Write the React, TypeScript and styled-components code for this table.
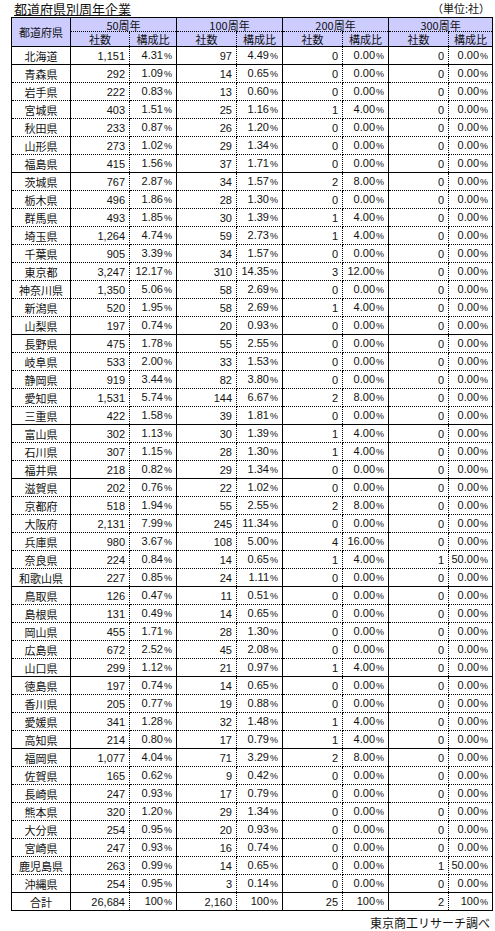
import styled, { createGlobalStyle } from "styled-components";

const GlobalStyle = createGlobalStyle`
  html, body {
    margin: 0;
    padding: 0;
    background: #fff;
  }
  body {
    font-family: "Noto Sans CJK JP", "Noto Sans", sans-serif;
    color: #111;
  }
`;

const Page = styled.div`
  width: 495px;
  padding-left: 11px;
  box-sizing: border-box;
`;

const TopBar = styled.div`
  width: 482px;
  height: 17px;
  display: flex;
  justify-content: space-between;
  align-items: center;
`;

const Title = styled.h1`
  margin: 0;
  padding-left: 3px;
  font-size: 13px;
  font-weight: 400;
  line-height: 17px;
  text-decoration: underline;
  text-underline-offset: 1px;
`;

const Unit = styled.span`
  padding-right: 3px;
  font-size: 11px;
  line-height: 17px;
`;

const Table = styled.table`
  width: 482px;
  table-layout: fixed;
  border-collapse: collapse;
  border: 1px solid #000;
  font-size: 11px;
  line-height: 12px;
`;

const Col = styled.col<{ $w: number }>`
  width: ${(p) => p.$w}px;
`;

const HeadRow = styled.tr<{ $h: number }>`
  height: ${(p) => p.$h}px;
`;

const HeadCell = styled.th<{ $right?: "solid" | "dotted"; $bottom?: "solid" | "dotted" }>`
  padding: 0;
  background: #ccccff;
  font-weight: 400;
  text-align: center;
  vertical-align: middle;
  border-right: 1px ${(p) => p.$right ?? "solid"} #000;
  border-bottom: 1px ${(p) => p.$bottom ?? "solid"} #000;
`;

const Row = styled.tr<{ $solid: boolean }>`
  height: 18px;
  & > td {
    border-bottom: 1px ${(p) => (p.$solid ? "solid" : "dotted")} #000;
  }
`;

const NameCell = styled.td`
  padding: 0;
  text-align: center;
  vertical-align: middle;
  border-right: 1px solid #000;
`;

const NumCell = styled.td<{ $kind: "count" | "ratio" }>`
  padding: 0 4px 0 0;
  text-align: right;
  vertical-align: middle;
  white-space: nowrap;
  font-family: "Liberation Sans", "Noto Sans", sans-serif;
  border-right: 1px ${(p) => (p.$kind === "count" ? "dotted" : "solid")} #000;
`;

const Pct = styled.span`
  font-size: 9px;
  margin-left: 1px;
`;

const Source = styled.div`
  width: 482px;
  margin-top: 4px;
  padding-right: 3px;
  box-sizing: border-box;
  text-align: right;
  font-size: 12px;
  line-height: 16px;
`;

const raw = `北海道,1151,4.31,97,4.49,0,0.00,0,0.00
青森県,292,1.09,14,0.65,0,0.00,0,0.00
岩手県,222,0.83,13,0.60,0,0.00,0,0.00
宮城県,403,1.51,25,1.16,1,4.00,0,0.00
秋田県,233,0.87,26,1.20,0,0.00,0,0.00
山形県,273,1.02,29,1.34,0,0.00,0,0.00
福島県,415,1.56,37,1.71,0,0.00,0,0.00
茨城県,767,2.87,34,1.57,2,8.00,0,0.00
栃木県,496,1.86,28,1.30,0,0.00,0,0.00
群馬県,493,1.85,30,1.39,1,4.00,0,0.00
埼玉県,1264,4.74,59,2.73,1,4.00,0,0.00
千葉県,905,3.39,34,1.57,0,0.00,0,0.00
東京都,3247,12.17,310,14.35,3,12.00,0,0.00
神奈川県,1350,5.06,58,2.69,0,0.00,0,0.00
新潟県,520,1.95,58,2.69,1,4.00,0,0.00
山梨県,197,0.74,20,0.93,0,0.00,0,0.00
長野県,475,1.78,55,2.55,0,0.00,0,0.00
岐阜県,533,2.00,33,1.53,0,0.00,0,0.00
静岡県,919,3.44,82,3.80,0,0.00,0,0.00
愛知県,1531,5.74,144,6.67,2,8.00,0,0.00
三重県,422,1.58,39,1.81,0,0.00,0,0.00
富山県,302,1.13,30,1.39,1,4.00,0,0.00
石川県,307,1.15,28,1.30,1,4.00,0,0.00
福井県,218,0.82,29,1.34,0,0.00,0,0.00
滋賀県,202,0.76,22,1.02,0,0.00,0,0.00
京都府,518,1.94,55,2.55,2,8.00,0,0.00
大阪府,2131,7.99,245,11.34,0,0.00,0,0.00
兵庫県,980,3.67,108,5.00,4,16.00,0,0.00
奈良県,224,0.84,14,0.65,1,4.00,1,50.00
和歌山県,227,0.85,24,1.11,0,0.00,0,0.00
鳥取県,126,0.47,11,0.51,0,0.00,0,0.00
島根県,131,0.49,14,0.65,0,0.00,0,0.00
岡山県,455,1.71,28,1.30,0,0.00,0,0.00
広島県,672,2.52,45,2.08,0,0.00,0,0.00
山口県,299,1.12,21,0.97,1,4.00,0,0.00
徳島県,197,0.74,14,0.65,0,0.00,0,0.00
香川県,205,0.77,19,0.88,0,0.00,0,0.00
愛媛県,341,1.28,32,1.48,1,4.00,0,0.00
高知県,214,0.80,17,0.79,1,4.00,0,0.00
福岡県,1077,4.04,71,3.29,2,8.00,0,0.00
佐賀県,165,0.62,9,0.42,0,0.00,0,0.00
長崎県,247,0.93,17,0.79,0,0.00,0,0.00
熊本県,320,1.20,29,1.34,0,0.00,0,0.00
大分県,254,0.95,20,0.93,0,0.00,0,0.00
宮崎県,247,0.93,16,0.74,0,0.00,0,0.00
鹿児島県,263,0.99,14,0.65,0,0.00,1,50.00
沖縄県,254,0.95,3,0.14,0,0.00,0,0.00
合計,26684,100,2160,100,25,100,2,100`;

const rows = raw.split("\n").map((line) => line.split(","));

// last row of each region gets a solid rule below it
const regionEnds = new Set([0, 6, 15, 20, 23, 29, 34, 38, 46, 47]);

const colWidths = [59, 59, 47, 60, 46, 60, 46, 60, 44];
const years = ["50周年", "100周年", "200周年", "300周年"];

const fmtCount = (v: string) => Number(v).toLocaleString("en-US");

export default function App() {
  return (
    <>
      <GlobalStyle />
      <Page>
        <TopBar>
          <Title>都道府県別周年企業</Title>
          <Unit>（単位:社）</Unit>
        </TopBar>
        <Table>
          <colgroup>
            {colWidths.map((w, i) => (
              <Col key={i} $w={w} />
            ))}
          </colgroup>
          <thead>
            <HeadRow $h={14}>
              <HeadCell rowSpan={2}>都道府県</HeadCell>
              {years.map((y) => (
                <HeadCell key={y} colSpan={2} $bottom="dotted">
                  {y}
                </HeadCell>
              ))}
            </HeadRow>
            <HeadRow $h={15}>
              {years.map((y) => [
                <HeadCell key={y + "c"} $right="dotted">
                  社数
                </HeadCell>,
                <HeadCell key={y + "r"}>構成比</HeadCell>,
              ])}
            </HeadRow>
          </thead>
          <tbody>
            {rows.map(([name, ...vals], i) => (
              <Row key={name} $solid={regionEnds.has(i)}>
                <NameCell>{name}</NameCell>
                {vals.map((v, j) =>
                  j % 2 === 0 ? (
                    <NumCell key={j} $kind="count">
                      {fmtCount(v)}
                    </NumCell>
                  ) : (
                    <NumCell key={j} $kind="ratio">
                      {v}
                      <Pct>%</Pct>
                    </NumCell>
                  )
                )}
              </Row>
            ))}
          </tbody>
        </Table>
        <Source>東京商工リサーチ調べ</Source>
      </Page>
    </>
  );
}
